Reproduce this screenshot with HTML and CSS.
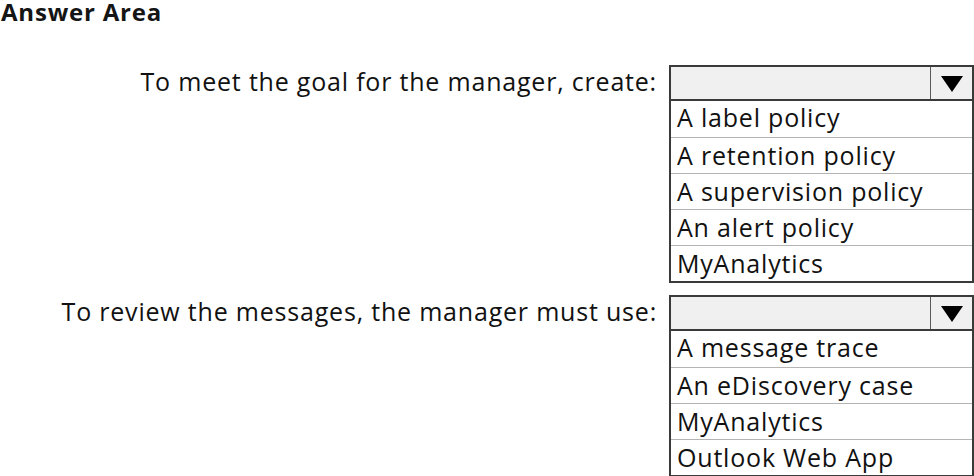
FILE: index.html
```html
<!DOCTYPE html>
<html lang="en">
  <head>
    <meta charset="UTF-8" />
    <title>Answer Area</title>
    <link rel="stylesheet" href="styles.css">
  </head>

  <body>
    <h1 class="title">Answer Area</h1>

    <div class="question">
      <div class="label">To meet the goal for the manager, create:</div>
      <div class="select">
        <div class="select-head">
          <span class="select-value"></span>
          <span class="select-arrow"><i class="tri"></i></span>
        </div>
        <ul class="options">
          <li>A label policy</li>
          <li>A retention policy</li>
          <li>A supervision policy</li>
          <li>An alert policy</li>
          <li>MyAnalytics</li>
        </ul>
      </div>
    </div>

    <div class="question second">
      <div class="label">To review the messages, the manager must use:</div>
      <div class="select">
        <div class="select-head">
          <span class="select-value"></span>
          <span class="select-arrow"><i class="tri"></i></span>
        </div>
        <ul class="options">
          <li>A message trace</li>
          <li>An eDiscovery case</li>
          <li>MyAnalytics</li>
          <li>Outlook Web App</li>
        </ul>
      </div>
    </div>
  </body>
</html>
```

FILE: styles.css
```css
* {
  padding: 0;
  margin: 0;
  list-style: none;
  box-sizing: border-box;
}

body {
  background: #fff;
  color: #111;
  font-family: "Open Sans", Lato, sans-serif;
  font-variant-ligatures: none;
  width: 974px;
  height: 476px;
  overflow: hidden;
}

.title {
  font-size: 24px;
  font-weight: bold;
  letter-spacing: 0.8px;
  line-height: 24px;
  padding-left: 1px;
  color: #151515;
}

.question {
  display: flex;
  align-items: flex-start;
  margin-top: 41px;
}

.question.second {
  margin-top: 12px;
}

.label {
  width: 658px;
  text-align: right;
  font-size: 25px;
  letter-spacing: 0.8px;
  line-height: 32px;
  padding-right: 1px;
  white-space: nowrap;
}

.select {
  width: 305px;
  margin-left: 11px;
  border: 2px solid #3a3a3a;
  background: #fff;
}

.select-head {
  display: flex;
  height: 34px;
  background: #f0f0f0;
  border-bottom: 2px solid #3a3a3a;
}

.select-value {
  flex: 1;
}

.select-arrow {
  width: 42px;
  border-left: 1px solid #5a5a5a;
  display: flex;
  align-items: center;
  justify-content: center;
}

.tri {
  width: 0;
  height: 0;
  border-left: 11px solid transparent;
  border-right: 11px solid transparent;
  border-top: 16px solid #000;
  margin-top: 2px;
}

.options li {
  height: 36px;
  padding-top: 2px;
  line-height: 30px;
  font-size: 25px;
  letter-spacing: 0.8px;
  padding-left: 6px;
  border-top: 1px solid #b4b4b4;
  color: #111;
  white-space: nowrap;
}

.options li:first-child {
  border-top: 0;
  padding-top: 1px;
}
```
